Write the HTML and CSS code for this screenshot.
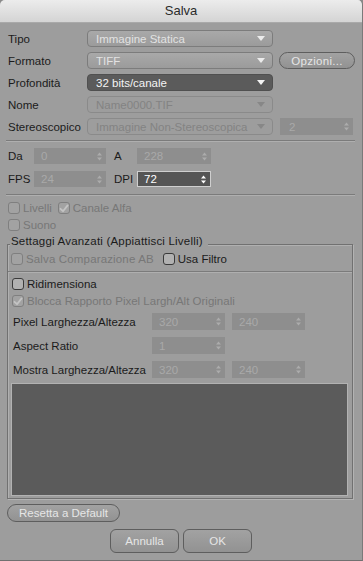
FILE: index.html
```html
<!DOCTYPE html>
<html>
<head>
<meta charset="utf-8">
<link rel="stylesheet" href="styles.css">
</head>
<body>
<div class="win">
  <div class="title">Salva</div>
  <div class="main">
    <div class="row">
      <span class="lbl">Tipo</span>
      <div class="sel lite"><span class="val">Immagine Statica</span><svg class="arr" width="8" height="5" viewBox="0 0 8 5"><path d="M0 0h8L4 5z"/></svg></div>
    </div>
    <div class="row">
      <span class="lbl">Formato</span>
      <div class="sel lite"><span class="val">TIFF</span><svg class="arr" width="8" height="5" viewBox="0 0 8 5"><path d="M0 0h8L4 5z"/></svg></div>
      <div class="btn opz">Opzioni...</div>
    </div>
    <div class="row">
      <span class="lbl">Profondità</span>
      <div class="sel dark"><span class="val">32 bits/canale</span><svg class="arr" width="8" height="5" viewBox="0 0 8 5"><path d="M0 0h8L4 5z"/></svg></div>
    </div>
    <div class="row">
      <span class="lbl">Nome</span>
      <div class="sel off"><span class="val">Name0000.TIF</span><svg class="arr" width="8" height="5" viewBox="0 0 8 5"><path d="M0 0h8L4 5z"/></svg></div>
    </div>
    <div class="row">
      <span class="lbl">Stereoscopico</span>
      <div class="sel off"><span class="val">Immagine Non-Stereoscopica</span><svg class="arr" width="8" height="5" viewBox="0 0 8 5"><path d="M0 0h8L4 5z"/></svg></div>
      <div class="spin stereo"><span class="val">2</span><svg class="sarr" width="5" height="9" viewBox="0 0 5 9"><path d="M0 3.6L2.5 0.4L5 3.6zM0 5.4L2.5 8.6L5 5.4z"/></svg></div>
    </div>

    <div class="sep s1"></div>

    <div class="row nrow">
      <span class="nl1">Da</span>
      <div class="spin w72"><span class="val">0</span><svg class="sarr" width="5" height="9" viewBox="0 0 5 9"><path d="M0 3.6L2.5 0.4L5 3.6zM0 5.4L2.5 8.6L5 5.4z"/></svg></div>
      <span class="nl2">A</span>
      <div class="spin w74"><span class="val">228</span><svg class="sarr" width="5" height="9" viewBox="0 0 5 9"><path d="M0 3.6L2.5 0.4L5 3.6zM0 5.4L2.5 8.6L5 5.4z"/></svg></div>
    </div>
    <div class="row nrow">
      <span class="nl1">FPS</span>
      <div class="spin w72"><span class="val">24</span><svg class="sarr" width="5" height="9" viewBox="0 0 5 9"><path d="M0 3.6L2.5 0.4L5 3.6zM0 5.4L2.5 8.6L5 5.4z"/></svg></div>
      <span class="nl2">DPI</span>
      <div class="spin w74 act"><span class="val">72</span><svg class="sarr" width="5" height="9" viewBox="0 0 5 9"><path d="M0 3.6L2.5 0.4L5 3.6zM0 5.4L2.5 8.6L5 5.4z"/></svg></div>
    </div>

    <div class="sep s2"></div>

    <div class="crow c1">
      <span class="cb"></span><span class="ctext off-t">Livelli</span>
      <span class="cb chk"><svg width="10" height="9" viewBox="0 0 10 9"><path d="M1.5 4.8L4 7.2L8.6 1.4" fill="none" stroke-width="1.8" stroke-linecap="round" stroke-linejoin="round"/></svg></span><span class="ctext off-t">Canale Alfa</span>
    </div>
    <div class="crow">
      <span class="cb"></span><span class="ctext off-t">Suono</span>
    </div>

    <div class="group">
      <div class="legend">Settaggi Avanzati (Appiattisci Livelli)</div>
      <div class="crow g1">
        <span class="cb"></span><span class="ctext off-t wide">Salva Comparazione AB</span>
        <span class="cb on"></span><span class="ctext">Usa Filtro</span>
      </div>
      <div class="gsep"></div>
      <div class="crow g2">
        <span class="cb on"></span><span class="ctext">Ridimensiona</span>
      </div>
      <div class="crow g3">
        <span class="cb chk"><svg width="10" height="9" viewBox="0 0 10 9"><path d="M1.5 4.8L4 7.2L8.6 1.4" fill="none" stroke-width="1.8" stroke-linecap="round" stroke-linejoin="round"/></svg></span><span class="ctext off-t">Blocca Rapporto Pixel Largh/Alt Originali</span>
      </div>
      <div class="grow">
        <span class="glbl">Pixel Larghezza/Altezza</span>
        <div class="spin w73"><span class="val">320</span><svg class="sarr" width="5" height="9" viewBox="0 0 5 9"><path d="M0 3.6L2.5 0.4L5 3.6zM0 5.4L2.5 8.6L5 5.4z"/></svg></div>
        <div class="spin w73 ml"><span class="val">240</span><svg class="sarr" width="5" height="9" viewBox="0 0 5 9"><path d="M0 3.6L2.5 0.4L5 3.6zM0 5.4L2.5 8.6L5 5.4z"/></svg></div>
      </div>
      <div class="grow">
        <span class="glbl">Aspect Ratio</span>
        <div class="spin w73"><span class="val">1</span><svg class="sarr" width="5" height="9" viewBox="0 0 5 9"><path d="M0 3.6L2.5 0.4L5 3.6zM0 5.4L2.5 8.6L5 5.4z"/></svg></div>
      </div>
      <div class="grow">
        <span class="glbl">Mostra Larghezza/Altezza</span>
        <div class="spin w73"><span class="val">320</span><svg class="sarr" width="5" height="9" viewBox="0 0 5 9"><path d="M0 3.6L2.5 0.4L5 3.6zM0 5.4L2.5 8.6L5 5.4z"/></svg></div>
        <div class="spin w73 ml"><span class="val">240</span><svg class="sarr" width="5" height="9" viewBox="0 0 5 9"><path d="M0 3.6L2.5 0.4L5 3.6zM0 5.4L2.5 8.6L5 5.4z"/></svg></div>
      </div>
      <div class="preview"></div>
    </div>

    <div class="btn reset">Resetta a Default</div>
    <div class="actions">
      <div class="btn big">Annulla</div>
      <div class="btn big">OK</div>
    </div>
  </div>
</div>
</body>
</html>
```

FILE: styles.css
```css
html, body {
  margin: 0;
  padding: 0;
  background: #8a8a8a;
}
.win {
  width: 363px;
  height: 561px;
  box-sizing: border-box;
  background: #9d9d9d;
  border-radius: 5px 5px 0 0;
  border-right: 1px solid #7a7a7a;
  border-bottom: 1px solid #707070;
  overflow: hidden;
  font-family: "Liberation Sans", Arial, sans-serif;
  font-size: 11.5px;
  color: #1b1b1b;
}
.title {
  height: 22px;
  line-height: 22px;
  text-align: center;
  font-size: 13px;
  color: #2b2b2b;
  background: linear-gradient(#ececec, #d4d4d4);
  border-bottom: 1px solid #a9a9a9;
}
.main {
  padding: 7px 7px 0 8px;
}
.row {
  display: flex;
  align-items: center;
  height: 17px;
  margin-bottom: 5px;
}
.lbl {
  width: 79px;
  flex: none;
  white-space: nowrap;
}
.sel {
  width: 186px;
  height: 17px;
  box-sizing: border-box;
  border-radius: 4px;
  display: flex;
  align-items: center;
  padding: 0 7px 0 8px;
  flex: none;
}
.sel .val {
  flex: 1;
  white-space: nowrap;
  overflow: hidden;
}
.arr {
  flex: none;
}
.lite {
  background: linear-gradient(#a9a9a9, #9b9b9b);
  border: 1px solid #7c7c7c;
  color: #e2e2e2;
  fill: #ececec;
}
.dark {
  background: #5b5b5b;
  border: 1px solid #505050;
  color: #f4f4f4;
  fill: #f4f4f4;
}
.off {
  background: #9d9d9d;
  border: 1px solid #8a8a8a;
  color: #838383;
  fill: #878787;
}
.btn {
  box-sizing: border-box;
  border: 1px solid #5e5e5e;
  background: linear-gradient(#a2a2a2, #929292);
  color: #e6e6e6;
  display: flex;
  align-items: center;
  justify-content: center;
  white-space: nowrap;
}
.opz {
  width: 76px;
  height: 17px;
  margin-left: 6px;
  border-radius: 9px;
  letter-spacing: 0.3px;
}
.spin {
  height: 16px;
  box-sizing: border-box;
  background: #8e8e8e;
  display: flex;
  align-items: center;
  padding: 0 4px 0 7px;
  color: #a9a9a9;
  fill: #acacac;
  flex: none;
}
.spin .val {
  flex: 1;
  white-space: nowrap;
}
.sarr {
  flex: none;
}
.stereo {
  width: 73px;
  height: 17px;
  margin-left: 7px;
  padding-left: 9px;
}
.sep {
  border-top: 1px solid #7b7b7b;
  border-bottom: 1px solid #afafaf;
  margin-left: -2px;
}
.s1 {
  margin-top: 1px;
  margin-bottom: 6px;
}
.nrow {
  height: 16px;
  margin-bottom: 7px;
}
.nl1 {
  width: 26px;
  flex: none;
}
.nl2 {
  width: 23px;
  margin-left: 8px;
  flex: none;
}
.w72 { width: 72px; }
.w74 { width: 74px; }
.w73 { width: 73px; }
.ml { margin-left: 7px; }
.act {
  background: #555555;
  border: 1px solid #cfcfcf;
  color: #ffffff;
  fill: #ffffff;
  padding-left: 6px;
}
.s2 {
  margin-top: 1px;
  margin-bottom: 5px;
}
.crow {
  display: flex;
  align-items: center;
  height: 14px;
  margin-bottom: 3px;
  white-space: nowrap;
}
.cb {
  width: 12px;
  height: 12px;
  box-sizing: border-box;
  border: 1px solid #7f7f7f;
  border-radius: 3px;
  background: #a2a2a2;
  flex: none;
  display: flex;
  align-items: center;
  justify-content: center;
}
.cb.on {
  border-color: #3a3a3a;
  background: #b1b1b1;
}
.cb.chk svg {
  stroke: #c4c4c4;
}
.ctext {
  margin-left: 3px;
  margin-right: 6px;
}
.ctext.wide {
  margin-right: 9px;
  letter-spacing: 0.15px;
}
.off-t {
  color: #777777;
}
.group {
  margin-top: 12px;
  margin-left: -1px;
  margin-right: 2px;
  border: 1px solid #717171;
  box-shadow: 1px 1px 0 #b3b3b3, inset 1px 1px 0 #b0b0b0;
  padding: 0 3px 2px 3px;
}
.legend {
  width: fit-content;
  margin-top: -11px;
  margin-left: -1px;
  padding-left: 1px;
  padding-right: 5px;
  background: #9d9d9d;
  line-height: 14px;
  letter-spacing: 0.2px;
  color: #1b1b1b;
}
.g1 {
  margin-top: 4px;
  margin-bottom: 5px;
}
.gsep {
  margin: 0 -3px 4px -3px;
  border-top: 1px solid #7b7b7b;
  border-bottom: 1px solid #afafaf;
}
.g2 { padding-left: 1px; }
.g3 { padding-left: 1px; margin-bottom: 5px; }
.grow {
  display: flex;
  align-items: center;
  height: 17px;
  margin-bottom: 7px;
  padding-left: 2px;
}
.grow .spin { height: 17px; }
.glbl {
  width: 139px;
  flex: none;
  white-space: nowrap;
}
.preview {
  height: 111px;
  margin-top: -2px;
  background: #5b5b5b;
  border: 1px solid #b2b2b2;
  margin-left: 0;
  margin-right: 1px;
}
.reset {
  width: 113px;
  height: 18px;
  border-radius: 9px;
  margin-top: 5px;
  margin-left: -1px;
}
.actions {
  display: flex;
  justify-content: center;
  gap: 4px;
  margin-top: 7px;
  margin-left: -1px;
}
.big {
  width: 69px;
  height: 24px;
  border-radius: 6px;
}
```
